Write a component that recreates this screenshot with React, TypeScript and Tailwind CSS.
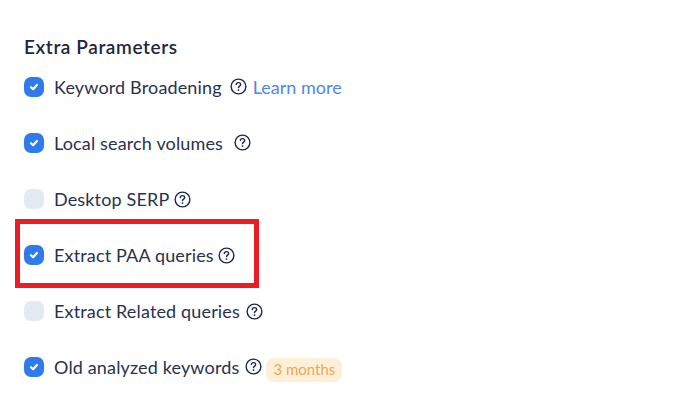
const Help = ({ className = "" }: { className?: string }) => (
  <svg viewBox="0 0 18 18" fill="none" className={`w-[17px] h-[17px] shrink-0 text-[#1e2a4a] ${className}`}>
    <circle cx="9" cy="9" r="7.8" stroke="currentColor" strokeWidth="1.5" />
    <path d="M6.7 7c0-1.3 1-2.1 2.3-2.1s2.3.8 2.3 2c0 1.7-2.3 1.7-2.3 3.3" stroke="currentColor" strokeWidth="1.5" strokeLinecap="round" />
    <circle cx="9" cy="12.8" r="1" fill="currentColor" />
  </svg>
);

const Check = ({ on }: { on: boolean }) => (
  <span className={`flex items-center justify-center w-5 h-5 -mt-[2px] rounded-[7px] shrink-0 ${on ? "bg-[#2f7bea]" : "bg-[#e3eaf6]"}`}>
    {on && (
      <svg viewBox="0 0 12 12" fill="none" className="w-3 h-3">
        <path d="M3 6.3l2.1 2 3.9-4.3" stroke="white" strokeWidth="2.2" strokeLinecap="round" strokeLinejoin="round" />
      </svg>
    )}
  </span>
);

const Row = ({ on, label, children }: { on: boolean; label: string; children?: React.ReactNode }) => (
  <div className="flex items-center h-6">
    <Check on={on} />
    <span className="ml-[10px] -mt-[2px] text-[18px] tracking-[0.15px] text-[#27324f]">{label}</span>
    {children}
  </div>
);

export default function App() {
  return (
    <div className="relative w-[690px] h-[414px] overflow-hidden bg-white pl-6 pt-9 font-['Lato',sans-serif]">
      <h2 className="text-[19px] leading-[22px] font-semibold tracking-[0.6px] text-[#1c2740]">Extra Parameters</h2>
      <div className="mt-[18px] flex flex-col gap-8">
        <Row on label="Keyword Broadening">
          <Help className="ml-[8px] -mt-[3px]" />
          <a className="ml-[6px] -mt-[2px] text-[18px] text-[#4f86e8]">Learn more</a>
        </Row>
        <Row on label="Local search volumes">
          <Help className="ml-[11px] -mt-[3px]" />
        </Row>
        <Row on={false} label="Desktop SERP">
          <Help className="ml-[5px] -mt-[2px]" />
        </Row>
        <Row on label="Extract PAA queries">
          <Help className="ml-[4px] -mt-[2px]" />
        </Row>
        <Row on={false} label="Extract Related queries">
          <Help className="ml-[6px] -mt-[2px]" />
        </Row>
        <Row on label="Old analyzed keywords">
          <Help className="ml-[6px] -mt-[4px]" />
          <span className="ml-[4px] mt-[3px] h-6 px-[7px] flex items-center rounded-lg bg-[#fdf0d9] text-[15px] text-[#f2a654]">3 months</span>
        </Row>
      </div>
      <div className="absolute left-[15px] top-[219px] w-[244px] h-[69px] border-[5px] border-[#ed1c24]" />
    </div>
  );
}
